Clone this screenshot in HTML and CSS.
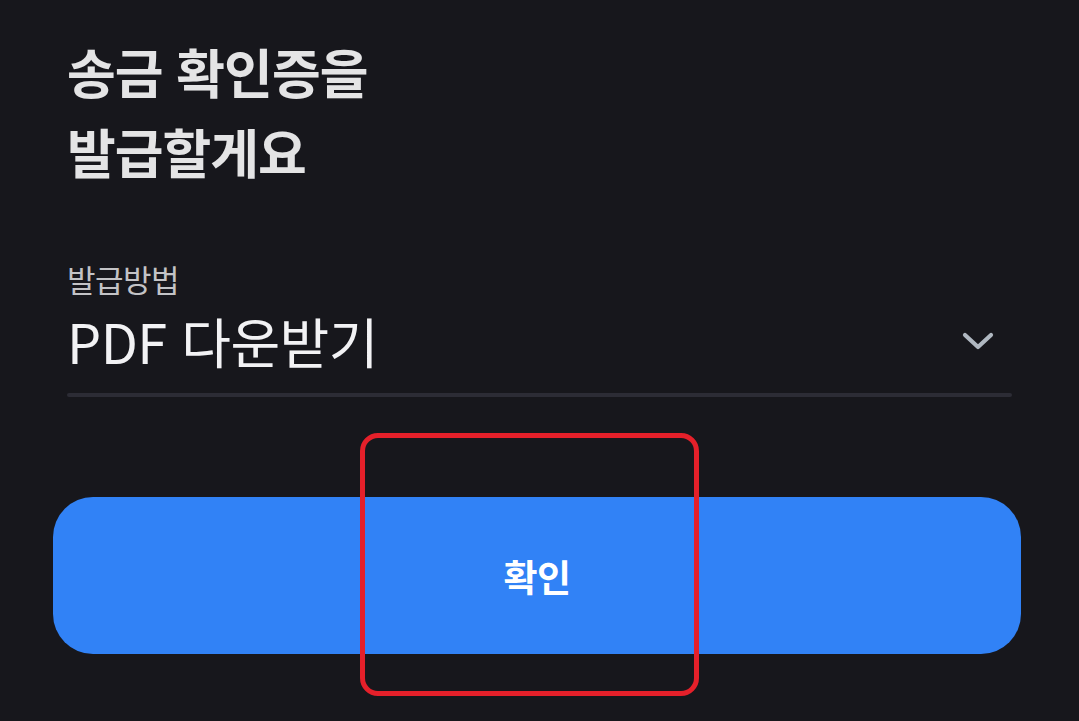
FILE: index.html
```html
<!DOCTYPE html>
<html lang="ko">
<head>
<meta charset="utf-8">
<link rel="stylesheet" href="styles.css">
</head>
<body>
<main class="screen">
  <h1 class="title">송금 확인증을<br>발급할게요</h1>
  <section class="field">
    <div class="label">발급방법</div>
    <div class="select">
      <span class="value">PDF 다운받기</span>
      <svg class="chevron" width="32" height="20" viewBox="0 0 32 20" aria-hidden="true">
        <polyline points="3,4 16,16 29,4" fill="none" stroke="#b0b8c1" stroke-width="4.2" stroke-linecap="round" stroke-linejoin="round"/>
      </svg>
    </div>
    <div class="underline"></div>
  </section>
  <div class="actions">
    <button class="confirm">확인</button>
  </div>
  <div class="annotation"></div>
</main>
</body>
</html>
```
FILE: styles.css
```css
html, body {
  margin: 0;
  padding: 0;
  background: #17171c;
}
body {
  width: 1079px;
  height: 721px;
  overflow: hidden;
  font-family: "Noto Sans CJK KR", "Noto Sans", sans-serif;
}
.screen {
  position: relative;
  height: 721px;
  padding-top: 1px;
  box-sizing: border-box;
}
.title {
  margin: 30px 0 0 67px;
  font-size: 53px;
  font-weight: 700;
  line-height: 80px;
  letter-spacing: -1px;
  color: #e4e4e5;
}
.field {
  margin: 68px 67px 0 67px;
}
.label {
  font-size: 31px;
  line-height: 40px;
  color: #c3c3c6;
  letter-spacing: -0.5px;
}
.select {
  display: flex;
  align-items: center;
  justify-content: space-between;
  padding-right: 18px;
  margin-top: 10px;
}
.value {
  font-size: 54px;
  line-height: 64px;
  color: #f2f2f4;
  letter-spacing: -0.5px;
}
.chevron {
  display: block;
}
.underline {
  margin-top: 20px;
  height: 4px;
  border-radius: 2px;
  background: #2c2c35;
}
.actions {
  margin: 100px 58px 0 53px;
}
.confirm {
  display: block;
  width: 100%;
  height: 157px;
  border: none;
  border-radius: 40px;
  background: #3182f6;
  color: #ffffff;
  font-family: "Noto Sans CJK KR", "Noto Sans", sans-serif;
  font-size: 37px;
  font-weight: 700;
  letter-spacing: -0.5px;
}
.annotation {
  position: absolute;
  left: 360px;
  top: 433px;
  width: 339px;
  height: 263px;
  box-sizing: border-box;
  border: 5px solid #e5202a;
  border-radius: 18px;
}
```
